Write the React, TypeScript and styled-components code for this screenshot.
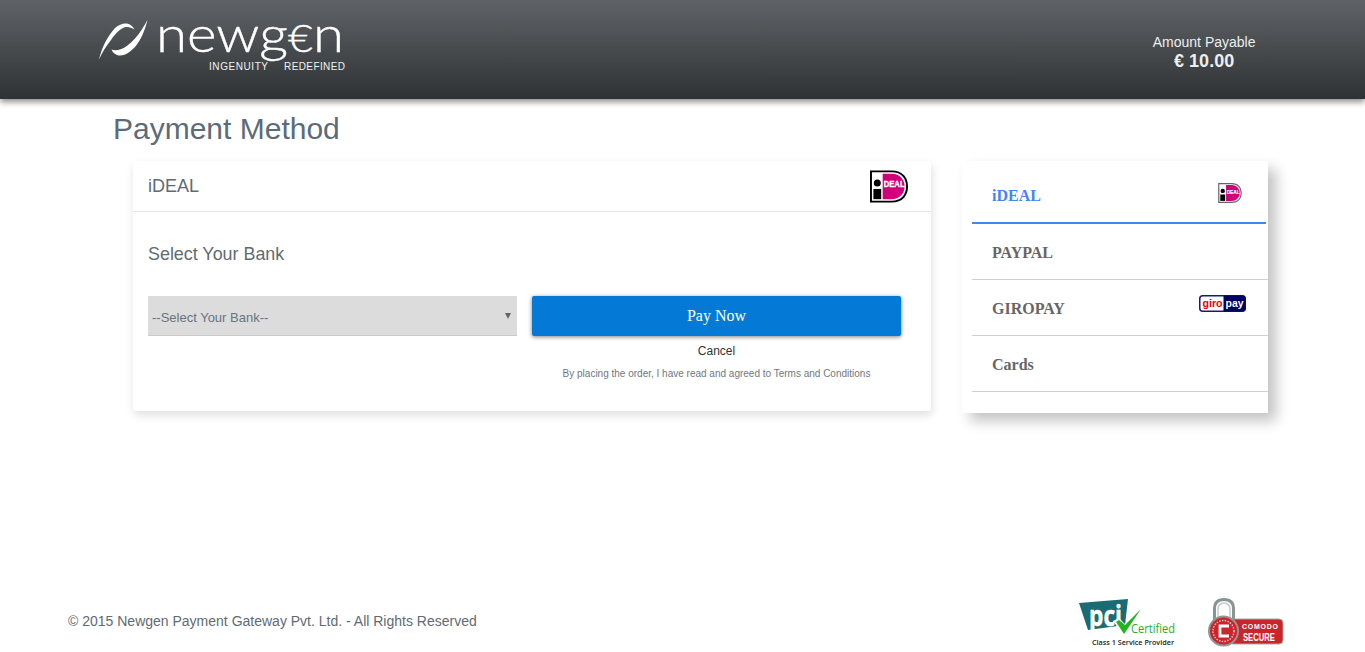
import React from "react";
import styled, { createGlobalStyle } from "styled-components";

const Global = createGlobalStyle`
  html, body { margin: 0; padding: 0; background: #fff; }
  body { font-family: "Liberation Sans", Arial, sans-serif; }
`;

const Page = styled.div`
  min-height: 652px;
  display: flex;
  flex-direction: column;
  overflow: hidden;
`;

const Header = styled.header`
  height: 99px;
  flex: none;
  display: flex;
  align-items: flex-start;
  justify-content: space-between;
  padding: 0 109.5px 0 98px;
  background: linear-gradient(to bottom, #5f6367 0%, #2f3234 100%);
  box-shadow: 0 3px 6px rgba(0, 0, 0, 0.45);
`;

const LogoSvg = styled.svg`
  display: block;
  width: 250px;
  height: 80px;
`;

const Amount = styled.div`
  margin-top: 34px;
  text-align: center;
  color: #eceeef;
`;

const AmountLabel = styled.div`
  font-size: 14px;
  line-height: 16px;
`;

const AmountValue = styled.div`
  font-size: 18px;
  font-weight: 700;
  line-height: 22px;
`;

const Title = styled.h1`
  margin: 12px 0 0 113px;
  font-size: 30px;
  line-height: 36px;
  font-weight: 400;
  color: #5b6b77;
`;

const Main = styled.main`
  display: flex;
  align-items: flex-start;
  gap: 31px;
  margin: 14px 0 0 133px;
`;

const Card = styled.section`
  width: 798px;
  height: 250px;
  background: #fff;
  border-radius: 3px;
  box-shadow: 1px 4px 10px rgba(0, 0, 0, 0.13);
`;

const CardHead = styled.div`
  height: 50px;
  display: flex;
  align-items: center;
  justify-content: space-between;
  padding: 0 23px 0 15px;
  border-bottom: 1px solid #e6e6e6;
`;

const CardName = styled.span`
  font-size: 18px;
  color: #5f6b73;
`;

const CardBody = styled.div`
  padding: 31px 30px 0 15px;
`;

const SelectLabel = styled.div`
  font-size: 17.9px;
  line-height: 22px;
  color: #5f6b73;
`;

const FormRow = styled.div`
  display: flex;
  gap: 15px;
  margin-top: 31px;
`;

const FakeSelect = styled.div`
  width: 369px;
  height: 40px;
  box-sizing: border-box;
  flex: none;
  display: flex;
  align-items: flex-start;
  justify-content: space-between;
  padding: 14px 6px 0 4px;
  background: #dcdcdc;
  border-bottom: 1px solid #cbcbcb;
  font-size: 13px;
  line-height: 15px;
  color: #68747f;
`;

const Caret = styled.span`
  width: 0;
  height: 0;
  margin-top: 3px;
  border-left: 3.5px solid transparent;
  border-right: 3.5px solid transparent;
  border-top: 6px solid #5f676d;
`;

const PayCol = styled.div`
  width: 369px;
  flex: none;
  text-align: center;
`;

const PayButton = styled.button`
  display: block;
  width: 100%;
  height: 40px;
  border: 0;
  border-radius: 2px;
  background: #047ad6;
  color: #fff;
  font-family: "Liberation Serif", "Times New Roman", serif;
  font-size: 16px;
  box-shadow: 0 1px 4px rgba(0, 0, 0, 0.5);
`;

const Cancel = styled.div`
  margin-top: 8px;
  font-size: 12px;
  line-height: 14px;
  color: #333;
`;

const Terms = styled.div`
  margin-top: 10px;
  font-size: 10px;
  line-height: 12px;
  color: #6f7880;
`;

const Side = styled.aside`
  width: 306px;
  height: 252px;
  box-sizing: border-box;
  padding: 7px 0 0 10px;
  background: #fff;
  box-shadow: 8px 8px 13px rgba(0, 0, 0, 0.24);
`;

const SideRow = styled.div<{ $active?: boolean }>`
  height: 56px;
  box-sizing: border-box;
  display: flex;
  align-items: center;
  justify-content: space-between;
  padding: 2px 22px 0 20px;
  margin-right: ${(p) => (p.$active ? "2px" : "0")};
  border-bottom: ${(p) => (p.$active ? "2px solid #4285f4" : "1px solid #cfcfcf")};
  font-family: "Liberation Serif", "Times New Roman", serif;
  font-size: 16px;
  font-weight: 700;
  color: ${(p) => (p.$active ? "#4285f4" : "#666")};
`;

const SmallIdeal = styled.svg`
  width: 24px;
  height: 20px;
  margin: 0 2px 6px 0;
`;

const GiroSvg = styled.svg`
  width: 47px;
  height: 17px;
  margin-bottom: 11px;
`;

const BigIdeal = styled.svg`
  width: 38px;
  height: 33px;
  display: block;
`;

const Footer = styled.footer`
  margin-top: auto;
  height: 54px;
  box-sizing: border-box;
  display: flex;
  align-items: center;
  justify-content: space-between;
  padding: 0 81px 4px 68px;
  font-size: 14px;
  color: #5f6b73;
`;

const Copyright = styled.span`
  margin-bottom: 4px;
`;

const Badges = styled.div`
  display: flex;
  align-items: center;
  gap: 31px;
`;

const PciSvg = styled.svg`
  display: block;
  margin: -6px -10px 0 0;
`;

const IdealMark = ({ big }: { big?: boolean }) => (
  <>
    <path d="M1 1H22C34 1 38 9 38 16.5C38 24 34 32 22 32H1Z" fill="#fff" stroke={big ? "#000" : "#666"} strokeWidth="2" />
    <path d="M13 3.5H22C31 3.5 35.5 10 35.5 16.5C35.5 23 31 29.5 22 29.5H13Z" fill="#d1007a" />
    <circle cx="7.5" cy="13" r="3.6" fill="#000" />
    <rect x="3.5" y="19" width="8" height="10.5" fill="#000" />
    <text x="14" y="17.5" fontFamily="'Liberation Sans', sans-serif" fontWeight="700" fontSize="9" textLength="21.5" lengthAdjust="spacingAndGlyphs" stroke="#fff" strokeWidth="0.3" fill="#fff">DEAL</text>
  </>
);

const NewgenLogo = () => (
  <LogoSvg viewBox="98 0 250 80">
    <path d="M99 59.5C102 47 107 37 115 28C119 24.5 123 23 127 23.5C130 24 133 26.5 134.5 29.5C131 27.5 128 26.3 124 27.5C120 29 115 34 111 40C106 46 102 53 99 59.5Z" fill="#fff" />
    <path d="M147.5 20C145 30 141 40 135 47C130 52 125 55.5 120 55.5C116 55.5 113 53 111.5 49.5C114 50.5 117 50.5 120 49.5C125 48 130 44 135 38.5C140 33 144 26 147.5 20Z" fill="#fff" />
    <text x="156" y="52" fontFamily="'Lato', sans-serif" fontWeight="300" fontSize="50" textLength="188" lengthAdjust="spacingAndGlyphs" stroke="#fff" strokeWidth="0.4" fill="#fff">
      newg<tspan fontSize="38">€</tspan>n
    </text>
    <text x="209" y="70" fontFamily="'Liberation Sans', sans-serif" fontSize="10" textLength="59" lengthAdjust="spacing" fill="#f2f2f2">INGENUITY</text>
    <text x="284" y="70" fontFamily="'Liberation Sans', sans-serif" fontSize="10" textLength="61" lengthAdjust="spacing" fill="#f2f2f2">REDEFINED</text>
  </LogoSvg>
);

const PciBadge = () => (
  <PciSvg width="108" height="56" viewBox="0 -6 108 56">
    <path d="M1 5L50 1L47 27L10 32Z" fill="#1a6b73" />
    <text x="11" y="27.5" fontFamily="'Open Sans', sans-serif" fontWeight="700" fontSize="29" textLength="33" lengthAdjust="spacingAndGlyphs" stroke="#fff" strokeWidth="0.5" fill="#fff">pci</text>
    <path d="M35 23L46 38L50 33L65 9L47 26L41 20Z" fill="#fff" />
    <path d="M38 24L46 36L63 11L47 27L41 22Z" fill="#1fb51c" />
    <text x="53" y="35" fontFamily="'Open Sans', sans-serif" fontSize="13" textLength="44" lengthAdjust="spacingAndGlyphs" fill="#1fb01c">Certified</text>
    <text x="14" y="46.7" fontFamily="'Open Sans', sans-serif" fontWeight="600" fontSize="7.6" textLength="82" lengthAdjust="spacingAndGlyphs" fill="#222">Class 1 Service Provider</text>
  </PciSvg>
);

const ComodoBadge = () => (
  <svg width="77" height="50" viewBox="0 0 77 50">
    <path d="M7.5 24V11C7.5 4.5 11 1.5 17 1.5S26.5 4.5 26.5 11V24" fill="none" stroke="#8a9493" strokeWidth="3" />
    <path d="M11 24V12C11 7.5 13.5 5 17 5S23 7.5 23 12V24" fill="none" stroke="#c4cbc9" strokeWidth="1.5" />
    <rect x="22" y="21" width="54" height="25" rx="4" fill="#c9252b" stroke="#a3abaa" strokeWidth="1" />
    <circle cx="16.5" cy="33" r="15.5" fill="#8e9897" />
    <circle cx="16.5" cy="33" r="13.5" fill="#c9252b" />
    <circle cx="16.5" cy="33" r="10.5" fill="none" stroke="#f1d2d2" strokeWidth="1.4" strokeDasharray="1.4 1.4" />
    <path d="M22 28H13V38H22" fill="none" stroke="#fff" strokeWidth="2.8" />
    <text x="35" y="31" fontFamily="'Liberation Sans', sans-serif" fontWeight="700" fontSize="7" textLength="36" lengthAdjust="spacing" fill="#fff">COMODO</text>
    <text x="36" y="43" fontFamily="'Liberation Sans', sans-serif" fontWeight="700" fontSize="10" textLength="32" lengthAdjust="spacingAndGlyphs" fill="#fff">SECURE</text>
  </svg>
);

export default function App() {
  return (
    <Page>
      <Global />
      <Header>
        <NewgenLogo />
        <Amount>
          <AmountLabel>Amount Payable</AmountLabel>
          <AmountValue>€ 10.00</AmountValue>
        </Amount>
      </Header>
      <Title>Payment Method</Title>
      <Main>
        <Card>
          <CardHead>
            <CardName>iDEAL</CardName>
            <BigIdeal viewBox="0 0 39 33">
              <IdealMark big />
            </BigIdeal>
          </CardHead>
          <CardBody>
            <SelectLabel>Select Your Bank</SelectLabel>
            <FormRow>
              <FakeSelect>
                --Select Your Bank--
                <Caret />
              </FakeSelect>
              <PayCol>
                <PayButton>Pay Now</PayButton>
                <Cancel>Cancel</Cancel>
                <Terms>By placing the order, I have read and agreed to Terms and Conditions</Terms>
              </PayCol>
            </FormRow>
          </CardBody>
        </Card>
        <Side>
          <SideRow $active>
            iDEAL
            <SmallIdeal viewBox="0 0 39 33">
              <IdealMark />
            </SmallIdeal>
          </SideRow>
          <SideRow>PAYPAL</SideRow>
          <SideRow>
            GIROPAY
            <GiroSvg viewBox="0 0 47 17">
              <rect x="0.75" y="0.75" width="45.5" height="15.5" rx="3" fill="#fff" stroke="#1d1a6e" strokeWidth="1.5" />
              <path d="M24.5 0.5H43.5A3 3 0 0 1 46.5 3.5V13.5A3 3 0 0 1 43.5 16.5H24.5Z" fill="#00005f" />
              <text x="3.5" y="11.5" fontFamily="'Liberation Sans', sans-serif" fontWeight="700" fontSize="10" textLength="20" lengthAdjust="spacingAndGlyphs" fill="#f00000">giro</text>
              <text x="26.5" y="11.5" fontFamily="'Liberation Sans', sans-serif" fontWeight="700" fontSize="10" textLength="18" lengthAdjust="spacingAndGlyphs" fill="#fff">pay</text>
            </GiroSvg>
          </SideRow>
          <SideRow>Cards</SideRow>
        </Side>
      </Main>
      <Footer>
        <Copyright>© 2015 Newgen Payment Gateway Pvt. Ltd. - All Rights Reserved</Copyright>
        <Badges>
          <PciBadge />
          <ComodoBadge />
        </Badges>
      </Footer>
    </Page>
  );
}
